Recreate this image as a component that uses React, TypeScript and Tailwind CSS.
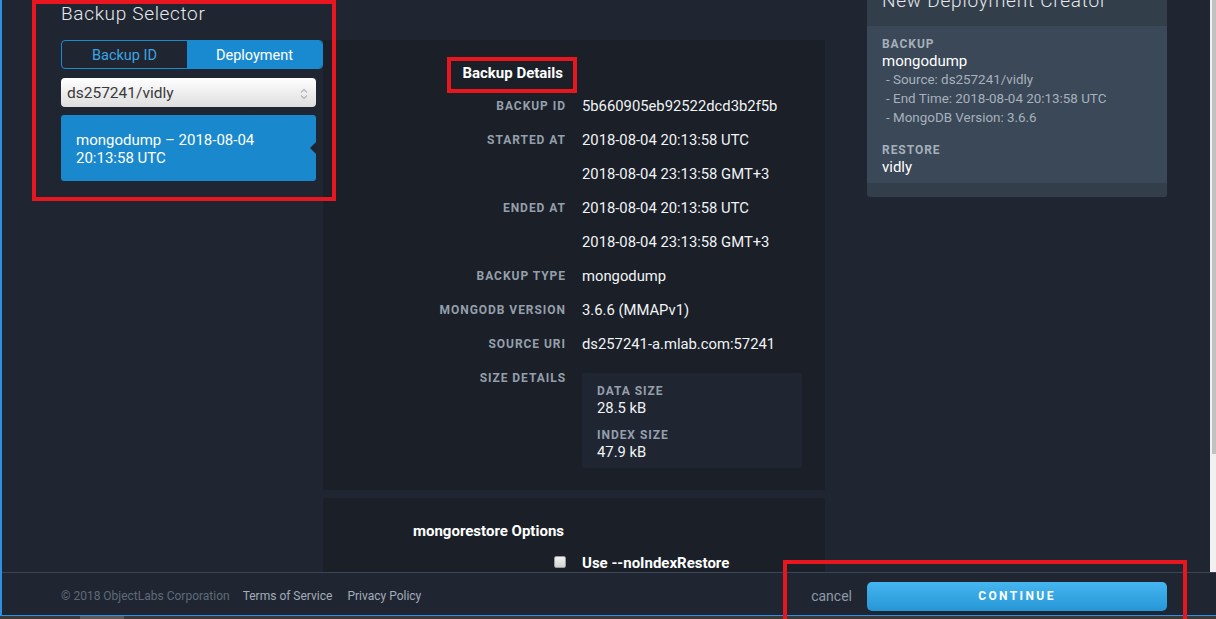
import { ReactNode } from 'react';

type RowProps = {
  label?: string;
  children?: ReactNode;
};

function DetailRow({ label, children }: RowProps) {
  return (
    <>
      <div className="text-right text-[12px] font-bold uppercase tracking-[0.08em] text-[#959fab] leading-[34px]">
        {label}
      </div>
      <div className="text-[14.8px] text-[#f1f3f5] leading-[34px]">{children}</div>
    </>
  );
}

function RedBox({ className }: { className: string }) {
  return <div className={`absolute border-[4px] border-[#e8161e] pointer-events-none ${className}`} />;
}

export default function App() {
  return (
    <div className="relative w-[1216px] h-[619px] overflow-hidden bg-[#3a3a3a] font-['Roboto',sans-serif]">
      <div className="h-[616px] flex flex-col border-l-2 border-b border-[#2f8fe0] bg-[#1f2632]">
        {/* scrolled content */}
        <div className="flex flex-1 min-h-0 overflow-hidden">
          <div className="flex flex-1 items-start">
            {/* left column */}
            <aside className="w-[321px] pl-[59px] pt-[2px]">
              <h2 className="text-[19px] font-light tracking-[0.035em] leading-[24px] text-[#e6e9ec]">
                Backup Selector
              </h2>
              <div className="mt-[14px] flex h-[29px] rounded-[4px] border border-[#1a8ad0] overflow-hidden text-[14.5px] leading-[28px]">
                <button className="w-[125px] pt-[1px] text-[#3ba5e4]">Backup ID</button>
                <button className="flex-1 pt-[1px] bg-[#1a8ad0] text-white">Deployment</button>
              </div>
              <div className="mt-[9px] w-[255px] h-[29px] rounded-[4px] bg-linear-to-b from-white to-[#dedede] flex items-center justify-between pl-[6px] pr-[8px] pt-[2px]">
                <span className="text-[15.5px] text-[#3a3a3a]">ds257241/vidly</span>
                <svg width="8" height="12" viewBox="0 0 8 12" fill="none" stroke="#b3b3b3" strokeWidth="1.2">
                  <path d="M1 4.5 L4 1.5 L7 4.5" />
                  <path d="M1 7.5 L4 10.5 L7 7.5" />
                </svg>
              </div>
              <div className="relative mt-[8px] w-[255px] h-[66px] rounded-[3px] bg-[#1a88cc] pt-[16px] px-[15px] text-[15px] leading-[18px] text-white">
                <div>mongodump – 2018-08-04</div>
                <div>20:13:58 UTC</div>
                <div className="absolute right-0 top-[27px] w-0 h-0 border-y-[6px] border-y-transparent border-r-[6px] border-r-[#1d2430]" />
              </div>
            </aside>

            {/* middle panel */}
            <main className="w-[502px] mt-[40px] flex flex-col gap-[8px]">
              <section className="bg-[#1a1f28] pt-[18px] pb-[22px]">
                <div className="grid grid-cols-[243px_1fr] gap-x-[16px]">
                  <div className="text-right text-[15px] font-bold text-white leading-[31px] pr-[3px]">
                    Backup Details
                  </div>
                  <div />
                  <DetailRow label="Backup ID">5b660905eb92522dcd3b2f5b</DetailRow>
                  <DetailRow label="Started At">2018-08-04 20:13:58 UTC</DetailRow>
                  <DetailRow>2018-08-04 23:13:58 GMT+3</DetailRow>
                  <DetailRow label="Ended At">2018-08-04 20:13:58 UTC</DetailRow>
                  <DetailRow>2018-08-04 23:13:58 GMT+3</DetailRow>
                  <DetailRow label="Backup Type">mongodump</DetailRow>
                  <DetailRow label="MongoDB Version">3.6.6 (MMAPv1)</DetailRow>
                  <DetailRow label="Source URI">ds257241-a.mlab.com:57241</DetailRow>
                  <div className="text-right text-[12px] font-bold uppercase tracking-[0.08em] text-[#959fab] leading-[34px]">
                    Size Details
                  </div>
                  <div className="mt-[12px] w-[220px] rounded-[3px] bg-[#1f2632] pl-[15px] pt-[10px] pb-[7px]">
                    <div className="text-[12px] font-bold uppercase tracking-[0.08em] text-[#959fab] leading-[16px]">
                      Data Size
                    </div>
                    <div className="text-[14.8px] text-[#f1f3f5] leading-[18px]">28.5 kB</div>
                    <div className="mt-[10px] text-[12px] font-bold uppercase tracking-[0.08em] text-[#959fab] leading-[16px]">
                      Index Size
                    </div>
                    <div className="text-[14.8px] text-[#f1f3f5] leading-[18px]">47.9 kB</div>
                  </div>
                </div>
              </section>
              <section className="bg-[#1a1f28] pt-[22px] pb-[30px]">
                <div className="grid grid-cols-[243px_1fr] gap-x-[16px]">
                  <div className="text-right text-[15px] font-bold text-white leading-[22px] pr-[2px]">
                    mongorestore Options
                  </div>
                  <div />
                  <div className="mt-[10px] flex justify-end items-start pt-[4px] h-[22px]">
                    <span className="w-[12px] h-[12px] rounded-[2px] border border-[#9a9a9a] bg-linear-to-b from-[#f2f2f2] to-[#d2d2d2]" />
                  </div>
                  <div className="mt-[10px] text-[15px] font-bold text-white leading-[22px]">
                    Use --noIndexRestore
                  </div>
                </div>
              </section>
            </main>

            {/* right card */}
            <div className="ml-[42px] -mt-[26px] w-[300px] rounded-[3px] overflow-hidden bg-[#333e4b]">
              <div className="h-[52px] pt-[15px] px-[15px] text-[19px] font-light tracking-[0.04em] leading-[24px] text-[#e4e8ec]">
                New Deployment Creator
              </div>
              <div className="bg-[#3a4858] px-[15px] pt-[10px] pb-[7px]">
                <div className="text-[12px] font-bold uppercase tracking-[0.08em] text-[#a6b0bb] leading-[16px]">
                  Backup
                </div>
                <div className="text-[15px] text-white leading-[18px]">mongodump</div>
                <div className="pl-[4px] text-[13.4px] text-[#a7b1bc] leading-[19px]">
                  <div>- Source: ds257241/vidly</div>
                  <div>- End Time: 2018-08-04 20:13:58 UTC</div>
                  <div>- MongoDB Version: 3.6.6</div>
                </div>
                <div className="mt-[15px] text-[12px] font-bold uppercase tracking-[0.08em] text-[#a6b0bb] leading-[16px]">
                  Restore
                </div>
                <div className="text-[15px] text-white leading-[18px]">vidly</div>
              </div>
              <div className="h-[14px]" />
            </div>
          </div>

          {/* scrollbar */}
          <div className="w-[6px] bg-[#f0f0f0] pl-[2px]">
            <div className="h-[454px] bg-[#c1c1c1]" />
          </div>
        </div>

        {/* footer */}
        <footer className="h-[43px] shrink-0 border-t border-[#3b4654] flex items-center pt-[4px] pl-[59px] pr-[49px] text-[12px]">
          <span className="text-[#5f6a77]">© 2018 ObjectLabs Corporation</span>
          <a className="ml-[13px] text-[#a3adb7]">Terms of Service</a>
          <a className="ml-[15px] text-[#a3adb7]">Privacy Policy</a>
          <span className="ml-auto text-[14px] text-[#8e99a5]">cancel</span>
          <button className="ml-[15px] w-[300px] h-[29px] rounded-[5px] bg-linear-to-b from-[#45b6f0] to-[#2696d6] text-[12px] font-bold tracking-[0.2em] text-white">
            CONTINUE
          </button>
        </footer>
      </div>
      <div className="h-[3px] pl-[80px]">
        <div className="w-[44px] h-full bg-[#5a5a5a]" />
      </div>

      {/* annotation boxes */}
      <RedBox className="left-[32px] top-0 w-[304px] h-[201px]" />
      <RedBox className="left-[447px] top-[57px] w-[130px] h-[36px]" />
      <RedBox className="left-[783px] top-[560px] w-[404px] h-[64px]" />
    </div>
  );
}
